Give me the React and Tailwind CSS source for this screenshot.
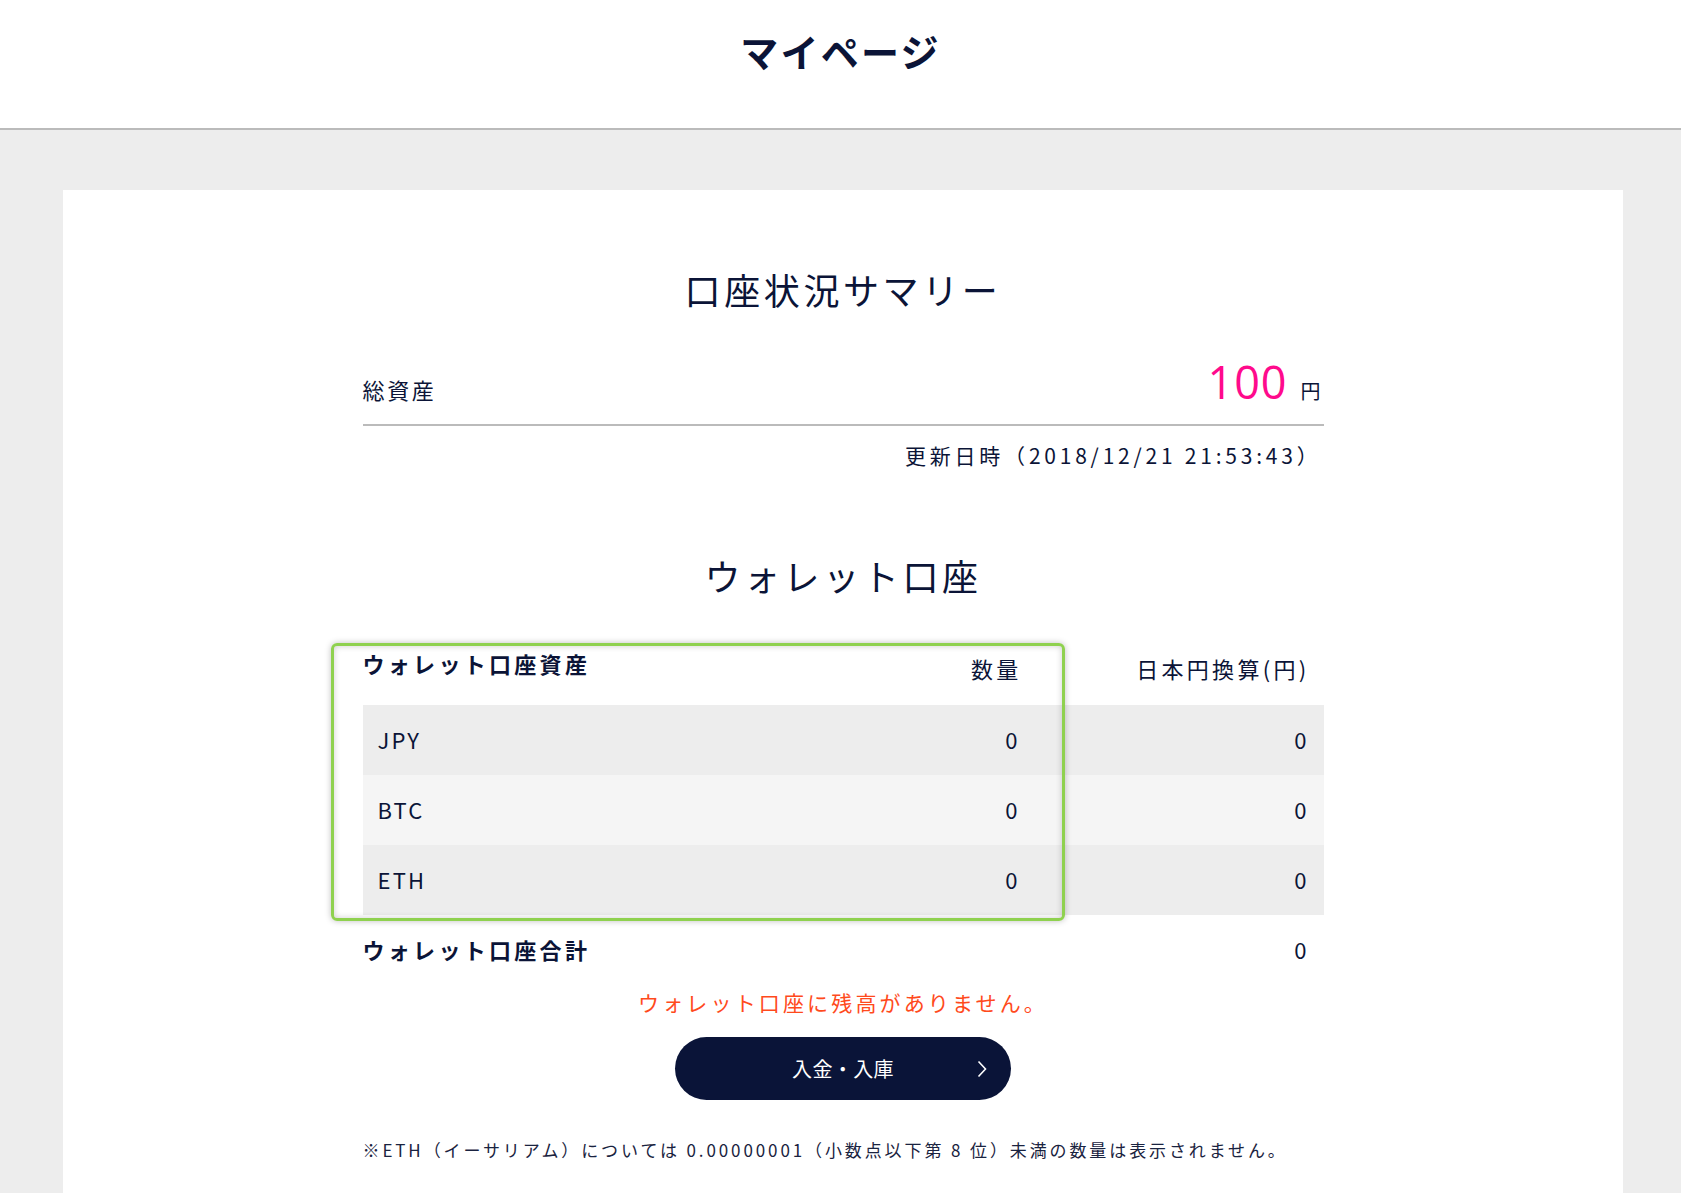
import React from "react";

const rows = [
  { name: "JPY", qty: "0", yen: "0", bg: "bg-[#ededed]" },
  { name: "BTC", qty: "0", yen: "0", bg: "bg-[#f5f5f5]" },
  { name: "ETH", qty: "0", yen: "0", bg: "bg-[#ededed]" },
];

export default function App() {
  return (
    <div
      className="min-h-screen bg-[#ededed] text-[#0b1437]"
      style={{ fontFamily: '"Noto Sans CJK JP", "Noto Sans", sans-serif' }}
    >
      <header className="h-[130px] bg-white border-b-2 border-[#bbbbbb] flex justify-center pt-[31px]">
        <h1 className="text-[38px] leading-[40px] font-bold tracking-[0.06em]">マイページ</h1>
      </header>

      <main className="pt-[60px] pl-[63px] pr-[58px]">
        <div className="bg-white pb-[60px]">
          <div className="w-[961px] mx-auto pt-[79px]">
            <h2 className="text-center text-[36px] leading-[40px] font-normal tracking-[0.1em]">
              口座状況サマリー
            </h2>

            <div className="mt-[51px] flex justify-between items-baseline border-b-2 border-[#bbbbbb] pb-[18px]">
              <span className="text-[22px] tracking-[0.12em]">総資産</span>
              <span className="flex items-baseline pr-[3px]">
                <span
                  className="text-[45px] leading-[44px] text-[#ff0a8c] tracking-[0.02em]"
                  style={{ fontFamily: '"Open Sans", "Noto Sans", sans-serif' }}
                >
                  100
                </span>
                <span className="ml-[13px] text-[20px]">円</span>
              </span>
            </div>

            <p className="mt-[14px] text-right pr-[2px] text-[21px] tracking-[0.18em]">
              更新日時（2018/12/21 21:53:43）
            </p>

            <h2 className="mt-[83px] text-center text-[36px] leading-[40px] font-normal tracking-[0.1em]">
              ウォレット口座
            </h2>

            <div className="relative mt-[47px]">
              <div className="grid grid-cols-[1fr_190px_289px] h-[63px]">
                <div className="pt-[7px] text-[22px] leading-[28px] font-bold tracking-[0.15em]">ウォレット口座資産</div>
                <div className="text-right pr-[13px] pt-[12px] text-[22px] leading-[28px] tracking-[0.15em]">数量</div>
                <div className="text-right pr-[14px] pt-[12px] text-[22px] leading-[28px] tracking-[0.15em]">
                  日本円換算(円)
                </div>
              </div>

              {rows.map((r) => (
                <div
                  key={r.name}
                  className={`grid grid-cols-[1fr_190px_289px] h-[70px] items-center text-[22px] ${r.bg}`}
                >
                  <div className="pl-[15px] tracking-[0.1em]">{r.name}</div>
                  <div className="text-right pr-[17px]">{r.qty}</div>
                  <div className="text-right pr-[17px]">{r.yen}</div>
                </div>
              ))}

              <div className="grid grid-cols-[1fr_190px_289px] h-[70px] items-center">
                <div className="text-[22px] font-bold tracking-[0.15em]">ウォレット口座合計</div>
                <div />
                <div className="text-right pr-[17px] text-[22px]">0</div>
              </div>

              <div className="pointer-events-none absolute left-[-32px] top-[1px] w-[734px] h-[278px] rounded-[6px] border-[3px] border-[#8fd14f] shadow-[0_0_6px_rgba(0,0,0,0.25),inset_0_0_6px_rgba(0,0,0,0.2)]" />
            </div>

            <p className="mt-[2px] text-center text-[21px] tracking-[0.15em] text-[#ff4a1c]">
              ウォレット口座に残高がありません。
            </p>

            <div className="mt-[19px] flex justify-center">
              <button className="relative w-[336px] h-[63px] rounded-full bg-[#0a1438] text-white text-[20px] tracking-[0.02em] flex items-center justify-center">
                入金・入庫
                <svg
                  className="absolute right-[24px] top-1/2 -translate-y-1/2"
                  width="10"
                  height="18"
                  viewBox="0 0 10 18"
                  fill="none"
                >
                  <path d="M1.5 1.5 L8.5 9 L1.5 16.5" stroke="white" strokeWidth="1.6" />
                </svg>
              </button>
            </div>

            <p className="mt-[37px] text-[17px] tracking-[0.17em] text-[#1a2340]">
              ※ETH（イーサリアム）については 0.00000001（小数点以下第 8 位）未満の数量は表示されません。
            </p>
          </div>
        </div>
      </main>
    </div>
  );
}
